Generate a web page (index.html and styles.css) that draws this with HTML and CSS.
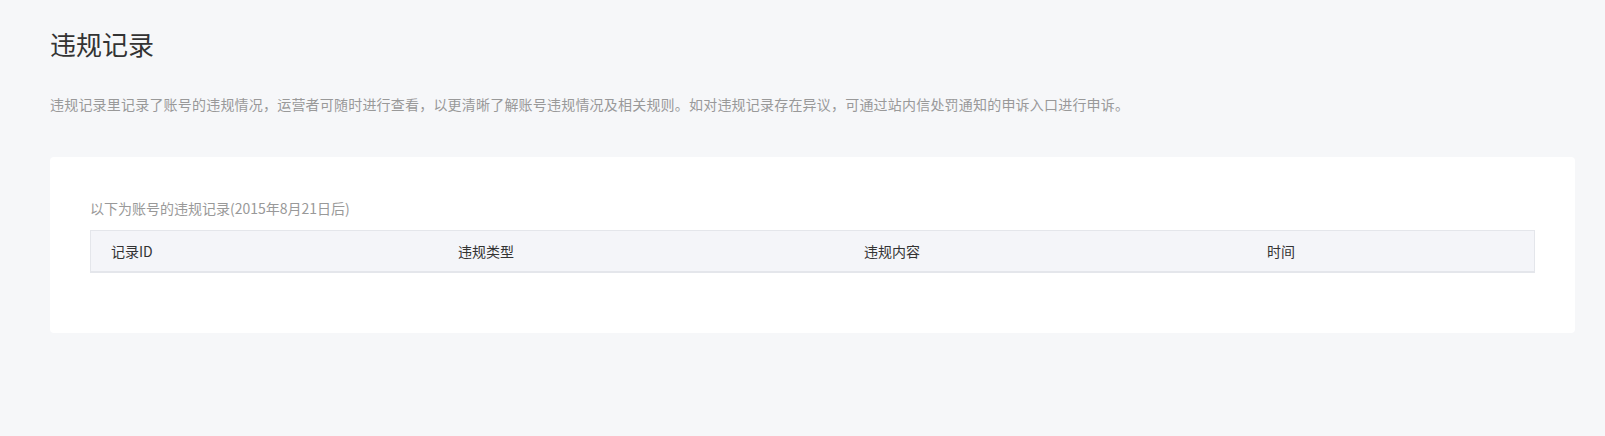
FILE: index.html
```html
<!DOCTYPE html>
<html lang="zh-CN">
<head>
    <meta charset="UTF-8">
    <meta name="viewport" content="width=device-width, initial-scale=1.0">
    <title>违规记录</title>
    <link rel="stylesheet" href="styles.css">
</head>
<body>
<main class="page">
    <h2 class="page-title">违规记录</h2>
    <p class="page-desc">违规记录里记录了账号的违规情况，运营者可随时进行查看，以更清晰了解账号违规情况及相关规则。如对违规记录存在异议，可通过站内信处罚通知的申诉入口进行申诉。</p>

    <section class="card">
        <p class="card-tip">以下为账号的违规记录(2015年8月21日后)</p>
        <table class="record-table">
            <colgroup>
                <col class="col-id">
                <col class="col-type">
                <col class="col-content">
                <col>
            </colgroup>
            <thead>
                <tr>
                    <th>记录ID</th>
                    <th>违规类型</th>
                    <th>违规内容</th>
                    <th>时间</th>
                </tr>
            </thead>
            <tbody></tbody>
        </table>
    </section>
</main>
</body>
</html>
```

FILE: styles.css
```css
body {
    font-family: "Noto Sans CJK SC", "Liberation Sans", sans-serif;
    margin: 0;
    padding: 0;
    background-color: #f6f7f9;
    color: #333;
}

.page {
    padding: 26px 30px 0 50px;
}

.page-title {
    margin: 0;
    font-size: 26px;
    font-weight: normal;
    line-height: 36px;
    color: #333;
}

.page-desc {
    margin: 32px 0 0;
    font-size: 14px;
    line-height: 20px;
    letter-spacing: 0.2px;
    color: #999;
}

.card {
    margin-top: 43px;
    padding: 41px 40px 60px;
    background: white;
    border-radius: 4px;
}

.card-tip {
    margin: 0 0 12px;
    font-size: 14px;
    line-height: 20px;
    color: #999;
}

.record-table {
    width: 100%;
    border-collapse: separate;
    border-spacing: 0;
    table-layout: fixed;
}

.col-id {
    width: 348px;
}

.col-type {
    width: 406px;
}

.col-content {
    width: 403px;
}

.record-table th {
    height: 40px;
    padding: 0 0 0 20px;
    background-color: #f4f5f9;
    border-top: 1px solid #e4e6eb;
    border-bottom: 2px solid #e4e6eb;
    font-size: 14px;
    font-weight: normal;
    line-height: 20px;
    text-align: left;
    color: #333;
}

.record-table th:first-child {
    border-left: 1px solid #e4e6eb;
}

.record-table th:last-child {
    border-right: 1px solid #e4e6eb;
}
```
